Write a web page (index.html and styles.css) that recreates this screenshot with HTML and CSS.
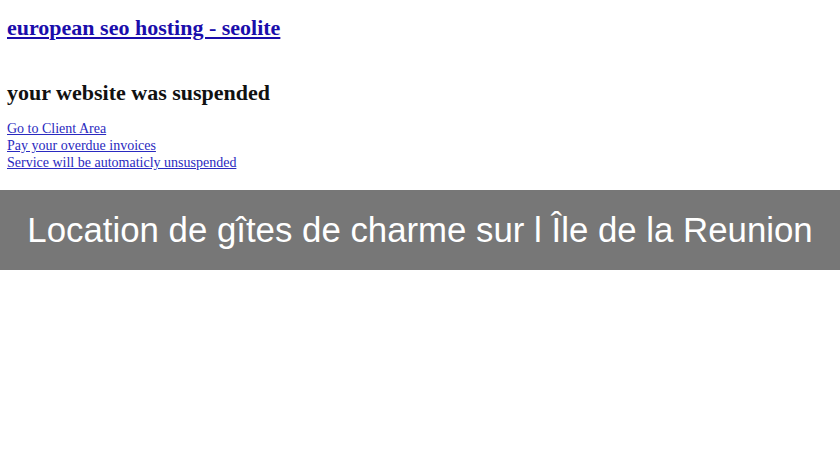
FILE: index.html
```html
<!DOCTYPE html>
<html lang="en">
  <head>
    <meta charset="UTF-8" />
    <meta name="viewport" content="width=device-width, initial-scale=1.0" />
    <title>Location de gîtes de charme sur l Île de la Reunion</title>
    <link rel="stylesheet" href="styles.css">
  </head>
  <body>
    <div class="page">
      <h2 class="site-title"><a href="#">european seo hosting - seolite</a></h2>
      <h3 class="notice">your website was suspended</h3>
      <div class="links">
        <a href="#">Go to Client Area</a>
        <a href="#">Pay your overdue invoices</a>
        <a href="#">Service will be automaticly unsuspended</a>
      </div>
    </div>

    <!-- bandeau titre -->
    <div class="banner">Location de gîtes de charme sur l Île de la Reunion</div>
  </body>
</html>
```

FILE: styles.css
```css
body {
  margin: 0;
  background: #fff;
  font-family: "Liberation Serif", serif;
}
.page {
  padding: 16px 7px 0 7px;
  height: 190px;
  box-sizing: border-box;
}
.site-title {
  margin: 0;
  font-size: 22px;
  line-height: 24px;
  font-weight: bold;
}
.site-title a {
  color: #1a0dab;
}
.notice {
  margin: 41px 0 0 0;
  font-size: 22px;
  line-height: 24px;
  color: #111;
}
.links {
  margin-top: 15px;
  display: flex;
  flex-direction: column;
  align-items: flex-start;
  font-size: 14px;
  line-height: 17px;
}
.links a {
  color: #2a2ac0;
}
.banner {
  background-color: #777;
  color: #fff;
  height: 80px;
  display: flex;
  align-items: center;
  justify-content: center;
  font-family: "Liberation Sans", Arial, sans-serif;
  font-size: 34.8px;
}
```
